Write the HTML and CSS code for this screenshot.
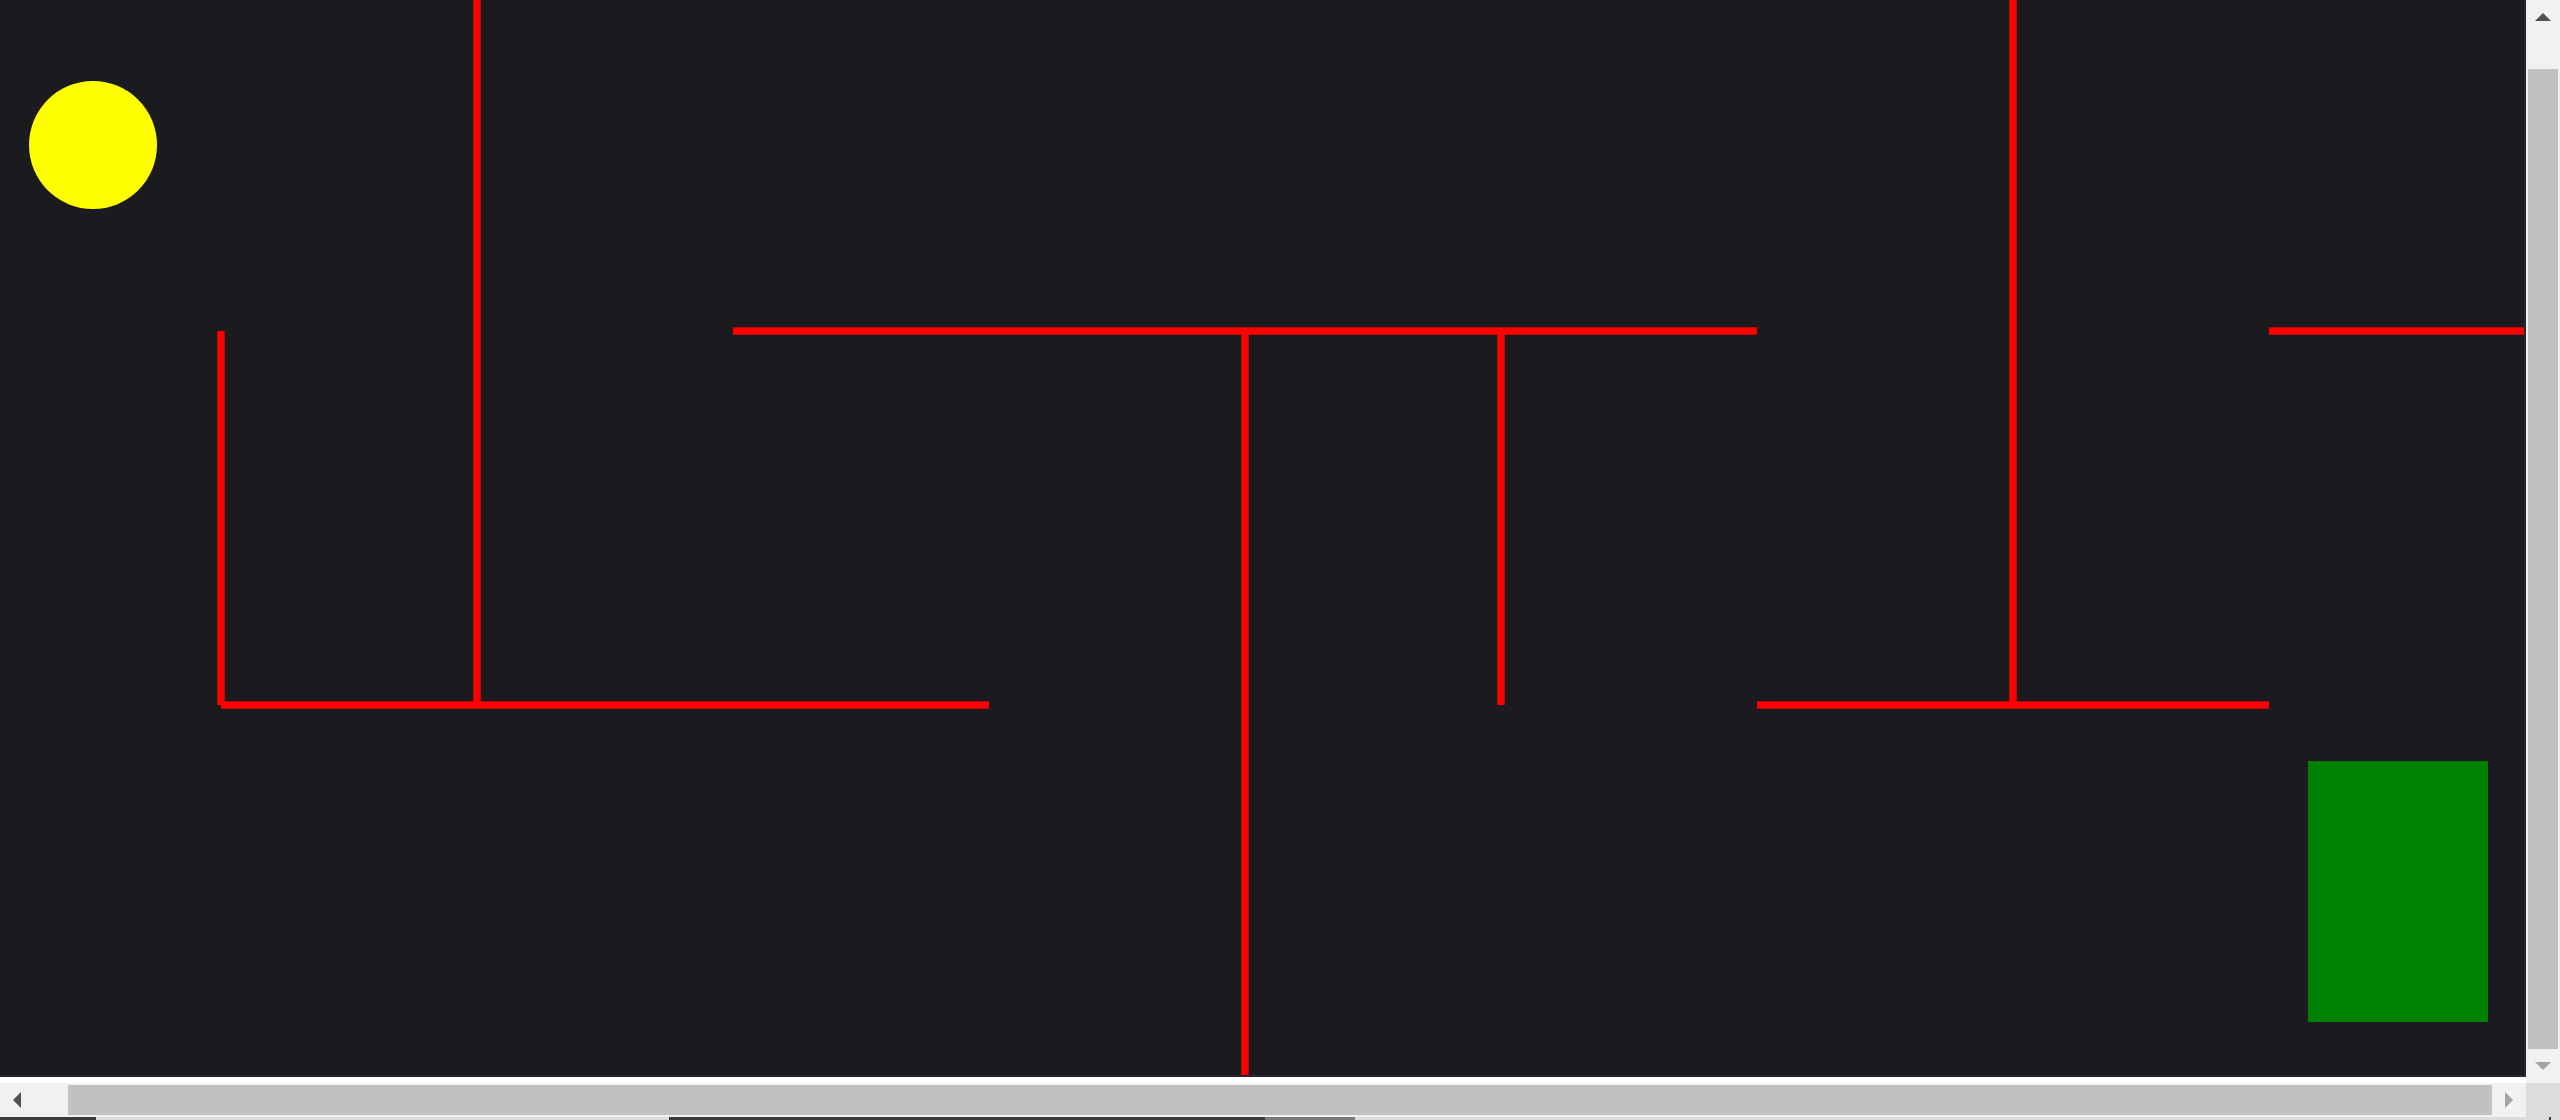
FILE: index.html
```html
<!DOCTYPE html>
<html lang="en">
<head>
<meta charset="utf-8">
<title>Maze</title>
<link rel="stylesheet" href="styles.css">
</head>
<body>
<div class="window">
  <div class="viewport">
    <div class="content">
      <svg class="maze" width="2524" height="1075" viewBox="0 0 2524 1075" xmlns="http://www.w3.org/2000/svg">
        <g class="walls" stroke="#ff0000" stroke-width="7.5" stroke-linecap="butt" fill="none">
          <line x1="477" y1="-43" x2="477" y2="705"/>
          <line x1="221" y1="331" x2="221" y2="705"/>
          <line x1="221" y1="705" x2="989" y2="705"/>
          <line x1="733" y1="331" x2="1757" y2="331"/>
          <line x1="1245" y1="331" x2="1245" y2="1079"/>
          <line x1="1501" y1="331" x2="1501" y2="705"/>
          <line x1="2013" y1="-43" x2="2013" y2="705"/>
          <line x1="1757" y1="705" x2="2269" y2="705"/>
          <line x1="2269" y1="331" x2="2525" y2="331"/>
        </g>
        <circle cx="93" cy="145" r="64" fill="#ffff00"/>
        <rect x="2308" y="761" width="180" height="261" fill="#008000"/>
      </svg>
    </div>
    <div class="vscroll">
      <div class="btn"><span class="tri tri-up"></span></div>
      <div class="vtrack"><div class="vthumb"></div></div>
      <div class="btn"><span class="tri tri-down"></span></div>
    </div>
    <div class="hscroll">
      <div class="btn"><span class="tri tri-left"></span></div>
      <div class="htrack"><div class="hthumb"></div></div>
      <div class="btn"><span class="tri tri-right"></span></div>
    </div>
    <div class="corner"></div>
  </div>
  <div class="strip">
    <span class="seg seg-a"></span>
    <span class="seg seg-b"></span>
    <span class="seg seg-c"></span>
    <span class="seg seg-d"></span>
    <span class="seg seg-e"></span>
    <span class="seg seg-f"></span>
    <span class="seg seg-g"></span>
  </div>
</div>
</body>
</html>
```
FILE: styles.css
```css
html, body {
  margin: 0;
  padding: 0;
  background: #ffffff;
  font-family: "Liberation Sans", Arial, sans-serif;
  overflow: hidden;
}

.window {
  width: 2560px;
  height: 1120px;
  display: flex;
  flex-direction: column;
}

.viewport {
  display: grid;
  grid-template-columns: 2526px 34px;
  grid-template-rows: 1083px 34px;
}

.content {
  background: #ffffff;
  overflow: hidden;
}

.maze {
  display: block;
  background: #1b1a1f;
  border-right: 2px solid #27253a;
  border-bottom: 2px solid #27253a;
}

/* vertical scrollbar */
.vscroll {
  display: flex;
  flex-direction: column;
  background: #f1f1f1;
}

.btn {
  width: 34px;
  height: 34px;
  flex: 0 0 34px;
  display: flex;
  align-items: center;
  justify-content: center;
  background: #f1f1f1;
}

.vtrack {
  flex: 1;
  display: flex;
  flex-direction: column;
  padding: 35px 2px 0;
}

.vthumb {
  flex: 1;
  background: #c1c1c1;
}

/* horizontal scrollbar */
.hscroll {
  display: flex;
  background: #f1f1f1;
}

.hscroll .btn {
  flex: 0 0 34px;
}

.htrack {
  flex: 1;
  display: flex;
  padding: 2px 0 2px 34px;
}

.hthumb {
  flex: 1;
  background: #c1c1c1;
}

.corner {
  background: #dcdcdc;
}

/* arrow triangles */
.tri {
  width: 0;
  height: 0;
  display: block;
}

.tri-up {
  border-left: 8px solid transparent;
  border-right: 8px solid transparent;
  border-bottom: 8px solid #505050;
}

.tri-down {
  border-left: 8px solid transparent;
  border-right: 8px solid transparent;
  border-top: 8px solid #a3a3a3;
}

.tri-left {
  border-top: 8px solid transparent;
  border-bottom: 8px solid transparent;
  border-right: 8px solid #505050;
}

.tri-right {
  border-top: 8px solid transparent;
  border-bottom: 8px solid transparent;
  border-left: 8px solid #a3a3a3;
}

/* partially visible bar below */
.strip {
  flex: 1;
  display: flex;
  background: #dcdcdc;
}

.seg {
  display: block;
  height: 100%;
}

.seg-a { width: 96px; background: #3c3c3c; }
.seg-b { width: 573px; background: #dcdcdc; }
.seg-c { width: 596px; background: #3c3c3c; }
.seg-d { width: 90px; background: #7a7a7a; }
.seg-e { width: 1194px; background: #dcdcdc; }
.seg-f { width: 2px; background: #3c3c3c; }
.seg-g { flex: 1; background: #dcdcdc; }
```
